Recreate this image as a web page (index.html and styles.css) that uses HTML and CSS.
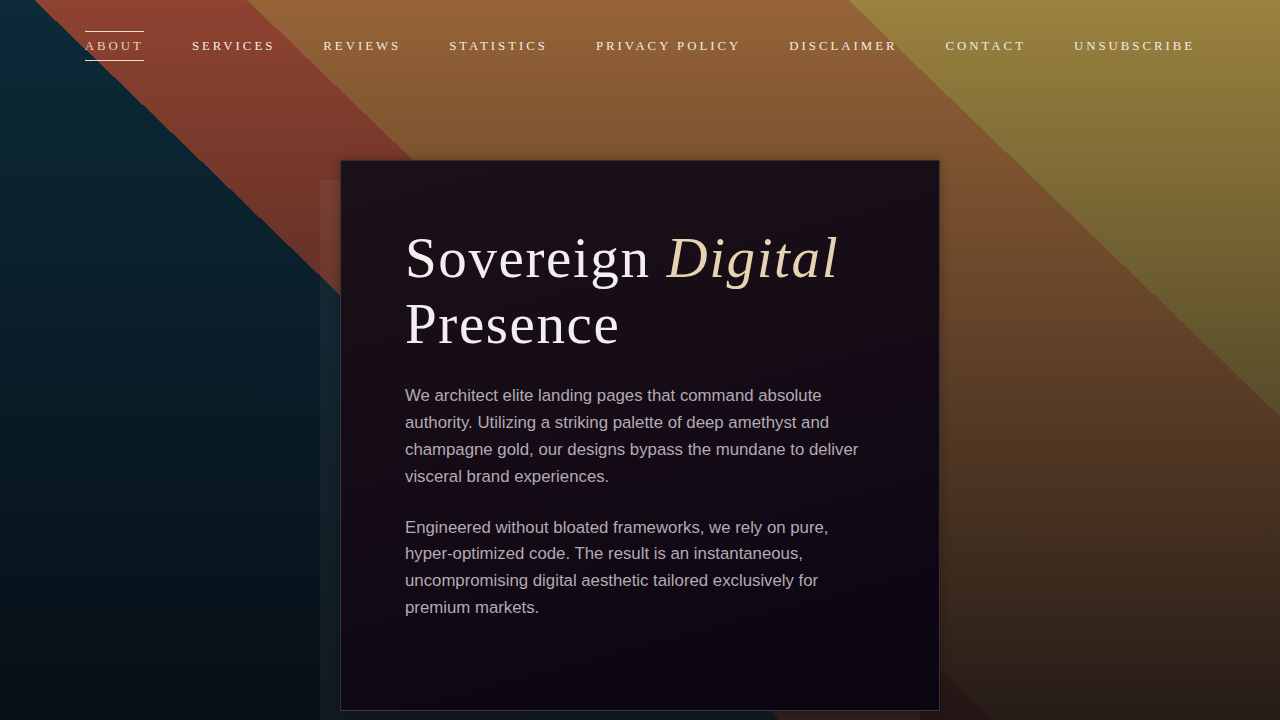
FILE: index.html
```html
<!DOCTYPE html>
<html lang="en">
<head>
<meta charset="utf-8">
<title>Sovereign Digital Presence</title>
<link rel="stylesheet" href="styles.css">
</head>
<body>
<header class="site-header">
  <nav class="main-nav">
    <a class="nav-link active" href="#">About</a>
    <a class="nav-link" href="#">Services</a>
    <a class="nav-link" href="#">Reviews</a>
    <a class="nav-link" href="#">Statistics</a>
    <a class="nav-link" href="#">Privacy Policy</a>
    <a class="nav-link" href="#">Disclaimer</a>
    <a class="nav-link" href="#">Contact</a>
    <a class="nav-link" href="#">Unsubscribe</a>
  </nav>
</header>
<main class="hero">
  <section class="card">
    <h1 class="title">Sovereign <em class="accent">Digital</em><br>Presence</h1>
    <p class="copy">We architect elite landing pages that command absolute authority. Utilizing a striking palette of deep amethyst and champagne gold, our designs bypass the mundane to deliver visceral brand experiences.</p>
    <p class="copy">Engineered without bloated frameworks, we rely on pure, hyper-optimized code. The result is an instantaneous, uncompromising digital aesthetic tailored exclusively for premium markets.</p>
  </section>
</main>
</body>
</html>
```

FILE: styles.css
```css
html, body {
  margin: 0;
  padding: 0;
}
body {
  min-height: 100vh;
  overflow: hidden;
  font-family: "Liberation Serif", "Times New Roman", serif;
  color: #f2ece8;
  background:
    linear-gradient(to bottom, rgba(6, 8, 14, 0) 0%, rgba(6, 8, 14, 0.78) 100%),
    linear-gradient(44deg, #0c2a38 0%, #0c2a38 38.5%, #8f4331 38.5%, #8f4331 49%, #966337 49%, #966337 78.7%, #9a823f 78.7%, #9a823f 100%);
  background-attachment: fixed;
}
.site-header {
  padding-top: 31px;
}
.main-nav {
  display: flex;
  justify-content: center;
  gap: 48px;
}
.nav-link {
  display: block;
  padding: 7px 0 6px;
  border-top: 1px solid transparent;
  border-bottom: 1px solid transparent;
  font-size: 12.8px;
  line-height: 15px;
  letter-spacing: 3px;
  text-transform: uppercase;
  text-decoration: none;
  color: #f3ebe4;
}
.nav-link.active {
  color: #ecd2bd;
  border-top-color: #f0dccb;
  border-bottom-color: #f0dccb;
}
.hero {
  display: flex;
  justify-content: center;
  padding-top: 99px;
}
.card {
  position: relative;
  box-sizing: border-box;
  width: 600px;
  padding: 64px;
  border: 1px solid rgba(255, 255, 255, 0.16);
  background: linear-gradient(165deg, #1c1117 0%, #140b16 50%, #0b0512 100%);
  box-shadow: 0 0 10px rgba(0, 0, 0, 0.3);
}
.card::before {
  content: "";
  position: absolute;
  left: -21px;
  top: 19px;
  width: 600px;
  height: 100%;
  background: rgba(255, 255, 255, 0.045);
  z-index: -1;
}
.title {
  margin: 0 0 26px;
  font-family: "Liberation Serif", "Times New Roman", serif;
  font-weight: 400;
  font-size: 57px;
  line-height: 66px;
  letter-spacing: 1.6px;
  color: #f4eef0;
}
.accent {
  font-style: italic;
  color: #e6d3b3;
}
.copy {
  margin: 0 0 24px;
  font-family: "Liberation Sans", Arial, sans-serif;
  font-size: 16.8px;
  line-height: 26.88px;
  color: #b3abb4;
}
```
